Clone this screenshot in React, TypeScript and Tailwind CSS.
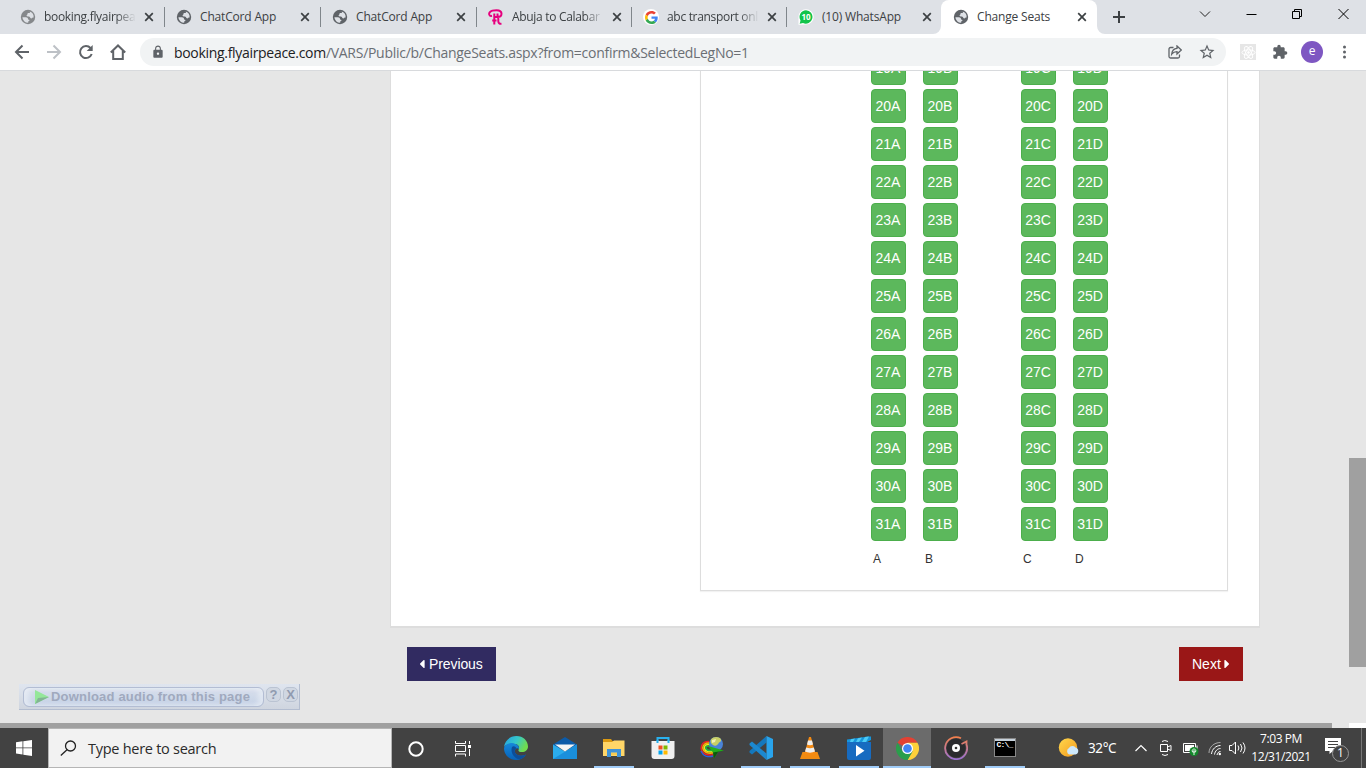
import React from "react";
import { MdExtension, MdLock, MdStarOutline } from "react-icons/md";
import { FaCaretLeft, FaCaretRight } from "react-icons/fa";

const Globe = ({ light }: { light?: boolean }) => (
  <svg className={light ? "h-4 w-4 text-[#85888b]" : "h-4 w-4 text-[#5f6368]"} viewBox="0 0 16 16">
    <circle cx="8" cy="8" r="7.200" fill="currentColor" />
    <path
      d="M2.400 8.200H6c1.200 0 2.100.8 2.100 1.900 0 .7.600.9 1.300.9v.8c-.8.1-1.200.6-1.200 1.300v.6A5.700 5.700 0 0 1 2.400 8.200z"
      fill="#dee1e6"
    />
    <path
      d="M8 2.500c.8 0 1.500.1 2.100.4-.1.900-.8 1.200-1.500 1.200-.9 0-1.300.6-1.300 1.300 0 .6-.4.900-1 .9.200 1 1.200 1.200 2.500 1.200 1 0 1.300.8 1.600 1.400.4.700 1.300.6 1.800 0 .3-.4.800-.5 1.400-.4.400-2.900-1.300-5.100-3.500-5.800z"
      fill="#dee1e6"
    />
  </svg>
);

const Royal = () => (
  <svg className="h-4 w-4" viewBox="0 0 16 16" fill="none" stroke="#e6007e" strokeWidth="2">
    <path d="M4 6.800C1 7.500.500 4.500 2 3 3.500 1.300 6 1.200 8.500 1.200 11.500 1.200 13.500 2.600 13.500 4.800 13.500 7 12 8 9.500 8H5.500M6.300 4.500V15.500M4.200 11.500H8.500M9.700 8c1 .8.500 2.500.600 4 0 2.500 1.500 3 3.200 2.600M9.500 4.500V8" />
  </svg>
);

const Google = () => (
  <span className="flex h-4 w-4 items-center justify-center rounded-full bg-white">
    <svg className="h-[13px] w-[13px]" viewBox="0 0 48 48">
      <path fill="#EA4335" d="M24 9.500c3.540 0 6.710 1.220 9.210 3.600l6.850-6.850C35.900 2.380 30.470 0 24 0 14.620 0 6.510 5.380 2.560 13.220l7.980 6.190C12.430 13.720 17.740 9.500 24 9.500z" />
      <path fill="#4285F4" d="M46.980 24.550c0-1.570-.15-3.090-.38-4.550H24v9.020h12.940c-.58 2.960-2.260 5.480-4.780 7.180l7.730 6c4.510-4.180 7.090-10.360 7.090-17.650z" />
      <path fill="#FBBC05" d="M10.530 28.590c-.48-1.450-.76-2.990-.76-4.590s.27-3.140.76-4.590l-7.980-6.190C.92 16.460 0 20.120 0 24c0 3.880.92 7.540 2.560 10.780l7.970-6.190z" />
      <path fill="#34A853" d="M24 48c6.480 0 11.930-2.130 15.890-5.810l-7.730-6c-2.150 1.450-4.920 2.300-8.160 2.300-6.260 0-11.570-4.220-13.470-9.910l-7.980 6.190C6.510 42.620 14.620 48 24 48z" />
    </svg>
  </span>
);

const WhatsApp = () => (
  <span className="relative flex h-4 w-4 items-center justify-center">
    <svg className="absolute inset-0 h-4 w-4" viewBox="0 0 16 16">
      <path d="M8 .2A7.600 7.600 0 0 1 8 15.600L.5 15.800.5 8A7.500 7.500 0 0 1 8 .2z" fill="#fff" />
      <path d="M8 1.200A6.700 6.700 0 1 1 5 14l-3.300.8.8-3.400A6.700 6.700 0 0 1 8 1.200z" fill="#12c44b" />
    </svg>
    <span className="relative font-['Open_Sans',sans-serif] text-[8px] leading-none font-bold text-white">10</span>
  </span>
);

const Cross = () => (
  <svg className="h-[10px] w-[10px] shrink-0" viewBox="0 0 10 10" stroke="#3c4043" strokeWidth="1.700">
    <path d="M1.200 1.200l7.600 7.600M8.800 1.200L1.200 8.800" />
  </svg>
);

type Tab = { title: string; icon: React.ReactNode; width: string; fade?: boolean; sep?: boolean };

const tabs: Tab[] = [
  { title: "booking.flyairpea", icon: <Globe light />, width: "w-[156px]", fade: true, sep: true },
  { title: "ChatCord App", icon: <Globe />, width: "w-[156px]", sep: true },
  { title: "ChatCord App", icon: <Globe />, width: "w-[156px]", sep: true },
  { title: "Abuja to Calabar", icon: <Royal />, width: "w-[155px]", fade: true, sep: true },
  { title: "abc transport onl", icon: <Google />, width: "w-[155px]", fade: true, sep: true },
  { title: "(10) WhatsApp", icon: <WhatsApp />, width: "w-[154px]" },
];

function TabBody({ title, icon, fade }: { title: string; icon: React.ReactNode; fade?: boolean }) {
  return (
    <>
      <span className="flex h-4 w-4 shrink-0 items-center justify-center">{icon}</span>
      <span
        className={
          fade
            ? "ml-2 w-[92px] shrink-0 tracking-[-0.310px] whitespace-nowrap [mask-image:linear-gradient(to_right,black_78%,transparent)]"
            : "ml-2 w-[92px] shrink-0 tracking-[-0.180px] whitespace-nowrap"
        }
      >
        {title}
      </span>
      <span className="ml-2 flex">
        <Cross />
      </span>
    </>
  );
}

function TabStrip() {
  return (
    <div className="flex h-[34px] shrink-0 bg-[#dee1e6] pl-[9px] text-[12px] text-[#3c4043]">
      {tabs.map((t, i) => (
        <div key={i} className={`flex shrink-0 items-center pl-[11px] ${t.width}`}>
          <TabBody title={t.title} icon={t.icon} fade={t.fade} />
          {t.sep && <span className="ml-auto h-5 w-px bg-[#80868b]" />}
        </div>
      ))}
      <div className="relative flex w-[156px] shrink-0 items-center rounded-t-[8px] bg-white pl-[12px]">
        <svg className="absolute bottom-0 -left-2 h-2 w-2" viewBox="0 0 8 8">
          <path d="M8 0v8H0a8 8 0 0 0 8-8z" fill="#fff" />
        </svg>
        <svg className="absolute -right-2 bottom-0 h-2 w-2" viewBox="0 0 8 8">
          <path d="M0 0v8h8a8 8 0 0 1-8-8z" fill="#fff" />
        </svg>
        <TabBody title="Change Seats" icon={<Globe />} />
      </div>
      <svg className="mt-[11px] ml-[16px] h-3 w-3" viewBox="0 0 12 12" stroke="#3c4043" strokeWidth="2">
        <path d="M6 0v12M0 6h12" />
      </svg>
      <div className="mt-[8px] mr-[17px] ml-auto flex h-3 items-center text-black">
        <svg className="mr-[35px] h-3 w-3" viewBox="0 0 12 12" fill="none" stroke="#222">
          <path d="M1 3.500l5 5 5-5" />
        </svg>
        <svg className="mr-[35px] h-3 w-[11px]" viewBox="0 0 11 12" stroke="#000">
          <path d="M0.500 6.500h10" />
        </svg>
        <svg className="mr-[35px] h-3 w-[11px]" viewBox="0 0 11 12" fill="none" stroke="#000">
          <path d="M.5 3.500h7v7h-7zM2.500 3.500v-2h7v7h-2" />
        </svg>
        <svg className="h-3 w-[11px]" viewBox="0 0 11 12" stroke="#000">
          <path d="M.5 1l10 10M10.500 1l-10 10" />
        </svg>
      </div>
    </div>
  );
}

function Toolbar() {
  return (
    <div className="flex h-[37px] shrink-0 items-center border-b border-[#d8dadd] bg-white pl-[14px]">
      <svg className="h-4 w-4" viewBox="0 0 16 16" fill="none" stroke="#5f6368" strokeWidth="2">
        <path d="M15 8H2M8.500 1.500L2 8l6.500 6.500" />
      </svg>
      <svg className="ml-4 h-4 w-4" viewBox="0 0 16 16" fill="none" stroke="#bdc1c6" strokeWidth="2">
        <path d="M1 8h13M7.500 1.500L14 8l-6.500 6.500" />
      </svg>
      <svg className="ml-4 h-4 w-4" viewBox="0 0 16 16" fill="none" stroke="#5f6368" strokeWidth="2">
        <path d="M13.700 10A6 6 0 1 1 12.500 4l1 1.200" />
        <path d="M14.700 1v6H8.700z" fill="#5f6368" stroke="none" />
      </svg>
      <svg className="ml-4 h-4 w-4" viewBox="0 0 16 16" fill="none" stroke="#5f6368" strokeWidth="2">
        <path d="M.8 8.500L8 1.500l7.200 7M3.200 7v8h9.600V7" />
      </svg>
      <div className="ml-[14px] flex h-7 w-[1086px] shrink-0 items-center rounded-full bg-[#f1f3f4] pr-[10px] pl-[11px]">
        <MdLock className="h-[14px] w-[14px] text-[#5f6368]" />
        <span className="ml-[9px] text-[14px] tracking-[-0.280px] whitespace-nowrap text-[#6b6f74]">
          <span className="tracking-[-0.310px] text-[#202124]">booking.flyairpeace.com</span>/VARS/Public/b/ChangeSeats.aspx?from=confirm&amp;SelectedLegNo=1
        </span>
        <svg className="ml-auto h-[14px] w-[14px]" viewBox="0 0 14 14" fill="none" stroke="#5f6368" strokeWidth="1.300">
          <path d="M5.500 2.500H2.500a1.500 1.500 0 0 0-1.500 1.500v7.500A1.500 1.500 0 0 0 2.500 13H10a1.500 1.500 0 0 0 1.500-1.500V9.500" />
          <path d="M9 1l4.300 4L9 9V6.700C6.500 6.700 5 7.500 3.700 9.200 4 6 5.800 3.700 9 3.400z" />
        </svg>
        <MdStarOutline className="ml-4 h-[18px] w-[18px] text-[#5f6368]" />
      </div>
      <span className="ml-[14px] flex h-4 w-4 items-center justify-center bg-[#e6e6e6]">
        <svg className="h-[15px] w-[15px]" viewBox="-8 -8 16 16" fill="none" stroke="#fff" strokeWidth="1">
          <ellipse rx="7" ry="2.800" />
          <ellipse rx="7" ry="2.800" transform="rotate(60)" />
          <ellipse rx="7" ry="2.800" transform="rotate(120)" />
          <circle r="1" fill="#fff" />
        </svg>
      </span>
      <MdExtension className="ml-4 h-4 w-4 text-[#5f6368]" />
      <span className="ml-[13px] flex h-[22px] w-[22px] items-center justify-center rounded-full bg-[#7e57c2] pb-0.5 text-[12px] leading-none text-white">
        e
      </span>
      <svg className="ml-[19px] h-4 w-1 overflow-visible" viewBox="0 0 4 16" fill="#5f6368">
        <circle cx="2.500" cy="3" r="1.500" />
        <circle cx="2.500" cy="8" r="1.500" />
        <circle cx="2.500" cy="13" r="1.500" />
      </svg>
    </div>
  );
}

const rows = [19, 20, 21, 22, 23, 24, 25, 26, 27, 28, 29, 30, 31];

function Seat({ label }: { label: string }) {
  return (
    <button className="h-[34px] w-[35px] rounded-[4px] border border-[#4cae4c] bg-[#5cb85c] pr-px text-center text-[14px] leading-[20px] text-white">
      {label}
    </button>
  );
}

function SeatMap() {
  return (
    <div className="-mt-[21px] ml-[309px] h-[541px] w-[528px] border border-[#ddd] pl-[170px] shadow-[0_1px_1px_rgba(0,0,0,0.05)]">
      <div className="flex flex-col gap-1">
        {rows.map((r) => (
          <div key={r} className="grid grid-cols-[52px_98px_52px_35px]">
            {["A", "B", "C", "D"].map((c) => (
              <Seat key={c} label={`${r}${c}`} />
            ))}
          </div>
        ))}
      </div>
      <div className="mt-[10px] grid grid-cols-[52px_98px_52px_35px] pl-[2px] text-[12px] leading-[17px] text-[#333]">
        <span>A</span>
        <span>B</span>
        <span>C</span>
        <span>D</span>
      </div>
    </div>
  );
}

function Page() {
  return (
    <div className="relative flex min-h-0 flex-1 bg-[#e6e6e6] font-['Liberation_Sans',Arial,sans-serif]">
      <div className="flex min-w-0 flex-1 flex-col overflow-hidden">
        <div className="flex h-[652px] flex-col overflow-hidden pl-[390px]">
          <div className="h-[557px] w-[870px] shrink-0 overflow-hidden border-x border-b-2 border-[#ddd] bg-white">
            <SeatMap />
          </div>
          <div className="mt-[19px] flex w-[853px] justify-between pl-[17px] text-[14px] text-white">
            <button className="flex h-[34px] w-[89px] items-center bg-[#312b61] pl-[11px] tracking-[-0.100px]">
              <FaCaretLeft className="mr-[3px] h-[14px] w-2" />
              Previous
            </button>
            <button className="flex h-[34px] w-[64px] items-center bg-[#9a1717] pl-[13px]">
              Next
              <FaCaretRight className="ml-[2px] h-[14px] w-2" />
            </button>
          </div>
        </div>
        <div className="h-[5px] w-[1332px] bg-[#a0a0a0]" />
      </div>
      <div className="flex w-[17px] flex-col justify-between pt-[387px]">
        <div className="h-[209px] bg-[#a0a0a0]" />
        <div className="h-[5px] bg-white" />
      </div>

      <div className="absolute top-[613px] left-[19px] flex h-[26px] w-[281px] items-center border-r border-b border-[#b3bdd0] bg-linear-to-b from-[#dfe5ef] to-[#cfd5df] pl-1">
        <div className="flex h-5 w-[241px] items-center rounded-[6px] border border-[#b3bdd3] bg-linear-to-b from-[#d9e0ec] to-[#c5d2e6] pl-[10px] shadow-[inset_5px_0_5px_rgba(235,240,247,0.7),inset_-5px_0_5px_rgba(235,240,247,0.6)]">
          <svg className="h-[14px] w-[15px] shrink-0" viewBox="0 0 15 14">
            <path d="M1 0l14 7-14 7z" fill="#94e79a" />
            <path d="M1 14l3-6 11-1z" fill="#82b594" />
          </svg>
          <span className="ml-0.5 text-[13px] font-bold tracking-[0.190px] whitespace-nowrap text-[#a0a9be]">Download audio from this page</span>
        </div>
        {["?", "X"].map((c) => (
          <span key={c} className="mb-[5px] ml-[2px] flex h-[15px] w-[15px] items-center justify-center rounded-[5px] border border-[#bac3d2] bg-[#d0d7e2] text-[13px] leading-none font-bold text-[#909bb0]">
            {c}
          </span>
        ))}
      </div>
    </div>
  );
}

const Cortana = () => (
  <svg className="h-6 w-6" viewBox="0 0 24 24">
    <circle cx="12" cy="12" r="6.700" fill="none" stroke="#fff" strokeWidth="2" />
  </svg>
);
const TaskView = () => (
  <svg className="h-6 w-6" viewBox="0 0 24 24" fill="none" stroke="#fff">
    <path d="M3.500 4v2.500h10V4M3.500 19.500V17h10v2.500M3.500 8.500h10v6h-10zM17.500 4v3M17.500 12v7" />
    <path d="M16 8h3v3h-3z" fill="#fff" stroke="none" />
  </svg>
);
const Edge = () => (
  <svg className="h-6 w-6" viewBox="0 0 24 24">
    <defs>
      <linearGradient id="eg" x1="0" y1="0" x2="1" y2=".4">
        <stop offset="0" stopColor="#239ee5" />
        <stop offset=".55" stopColor="#36c8c9" />
        <stop offset="1" stopColor="#70dc4e" />
      </linearGradient>
      <linearGradient id="eb" x1="0" y1="0" x2="0" y2="1">
        <stop offset="0" stopColor="#1688da" />
        <stop offset="1" stopColor="#0762b8" />
      </linearGradient>
    </defs>
    <path d="M0 11C1 4.500 6 0 12.500 0 19 0 24 4.800 24 10.500c0 3.500-2.700 5.500-6 5.500-2.500 0-4-1-3.500-2 1.500-3 0-6-4-6C6 7 2 8.500 0 11z" fill="url(#eg)" />
    <path d="M0 12C1 8 5 6.700 9 7.200c4 .5 6.500 3 6 5.800-2-2-5 .2-4 3.500 1 3 6 4.500 11 2C20 22 16.500 24 12 24 5 24 0 18.500 0 12z" fill="url(#eb)" />
    <path d="M8 11c-2 5 2 12 8 12.300 2.700-.8 4.700-2.500 6-4.800-5 2.500-10 1-11-2-.6-2 0-3.500 1.500-4.200C11.500 10.500 9.500 9.500 8 11z" fill="#0c4e9a" />
  </svg>
);
const Mail = () => (
  <svg className="h-6 w-6" viewBox="0 0 24 24">
    <path d="M0 8.500L12 1l12 7.500V12H0z" fill="#0c5ba8" />
    <path d="M0 8.500l12 7 12-7V23H0z" fill="#2bacec" />
    <path d="M0 23L24 8.500V23z" fill="#1a8fdb" />
    <path d="M2 8.500h20l-10 7z" fill="#f5f5f5" />
  </svg>
);
const Explorer = () => (
  <svg className="h-6 w-6" viewBox="0 0 24 24">
    <path d="M1 3h8l1.500 2H22v3H1z" fill="#dc9a12" />
    <path d="M1 6h9l2-1.500h10.500V20H1z" fill="#ffd668" />
    <path d="M5 21v-8h14v8h-4v-4.500H9V21z" fill="#3f93d8" />
    <path d="M9 17h6v2H9z" fill="#f9cb50" />
  </svg>
);
const Store = () => (
  <svg className="h-6 w-6" viewBox="0 0 24 24">
    <path d="M6.500 6V2h11v4" fill="none" stroke="#29b1ee" strokeWidth="2" />
    <path d="M.5 5h23v15a3 3 0 0 1-3 3h-17a3 3 0 0 1-3-3z" fill="#f0f0f0" />
    <path d="M5.500 4h2v3h-2zM16.500 4h2v3h-2z" fill="#29b1ee" />
    <path d="M7.500 9.500h4v4h-4z" fill="#f25022" />
    <path d="M12.500 9.500h4v4h-4z" fill="#7fba00" />
    <path d="M7.500 14.500h4v4h-4z" fill="#00a4ef" />
    <path d="M12.500 14.500h4v4h-4z" fill="#ffb900" />
  </svg>
);
const Idm = () => (
  <svg className="h-6 w-6" viewBox="0 0 24 24" fill="none">
    <path d="M9 5.500C4 5 .8 8.500 1.200 12.500 2 18.500 8 20 14 18.500" stroke="#e22" strokeWidth="1.500" />
    <path d="M9.500 7C5 6.700 2.700 9 2.800 12c.7 4.500 5.200 6 11.200 4.800" stroke="#ffb000" strokeWidth="1.500" />
    <path d="M10 8.500c-4-.4-5.700 1.200-5.700 3.500.7 3.200 4.700 4.500 9.700 3.300" stroke="#e8ec20" strokeWidth="1.500" />
    <path d="M10 10c-3-.4-4.200.6-4.200 2 .7 2.200 4.200 3 8.200 2" stroke="#19b946" strokeWidth="1.500" />
    <path d="M1 15c2 5 7 6.500 12 5" stroke="#2760df" strokeWidth="1.500" />
    <circle cx="16" cy="8" r="7" fill="#4a83d8" />
    <path d="M11 3.500C13.500.500 17 .500 20 2c2 2 1 4-1 4.500-1 3-4 4-6 2.500-2-1-3-3.500-2-5.500z" fill="#c9cf65" />
    <path d="M12 4l4-1-1 3-3 1z" fill="#f2f0b8" />
    <path d="M8 10l16 4.500-6 1.500-4 6.500-1-6z" fill="#23ad1d" />
    <path d="M14 22.500l4-6.500 6-1.500-11 2z" fill="#0b590e" />
  </svg>
);
const Code = () => (
  <svg className="h-6 w-6" viewBox="0 0 24 24">
    <path d="M17.500 0v6.500L3 18.500.5 16.500V15z" fill="#1478bd" />
    <path d="M17.500 24v-6.500L3 5.500.5 7.500V9z" fill="#1c88cf" />
    <path d="M17.500 0L24 3v18l-6.500 3z" fill="#29a4ec" />
  </svg>
);
const Vlc = () => (
  <svg className="h-6 w-6" viewBox="0 0 24 24">
    <path d="M4.500 16h15l2.500 7H2z" fill="#f08b12" />
    <path d="M11 1h2l4.500 17c-2 2-9 2-11 0z" fill="#f48a13" />
    <path d="M10 4.500h4l1 4c-2 1-4 1-6 0zM8.200 11.500c3 1 4.600 1 7.600 0l1.200 4c-3 1.500-7 1.500-10 0z" fill="#eee" />
  </svg>
);
const Movies = () => (
  <svg className="h-6 w-6" viewBox="0 0 24 24">
    <path d="M0 6V3.500L21 .5h3V4L20 6z" fill="#1696dc" />
    <path d="M4 3.200l4-.6L6 6H3zM11 2.200l4-.6L12 6H9zM18 1l4-.5L19 6h-4z" fill="#4ccaf5" />
    <path d="M0 6h24v16a2 2 0 0 1-2 2H2a2 2 0 0 1-2-2z" fill="#176bc0" />
    <path d="M9 9l8.500 5.700L9 20.500z" fill="#fff" />
  </svg>
);
const Chrome = () => (
  <svg className="h-[23px] w-[23px]" viewBox="0 0 48 48">
    <path d="M24 24L3.200 12A24 24 0 0 1 44.800 12H24z" fill="#e34133" />
    <path d="M24 12h20.800A24 24 0 0 1 24 48l10.400-18z" fill="#fdd13a" />
    <path d="M34.400 30L24 48A24 24 0 0 1 3.200 12l10.400 18z" fill="#2a9e4b" />
    <circle cx="24" cy="24" r="11.500" fill="#fff" />
    <circle cx="24" cy="24" r="9" fill="#4285f4" />
  </svg>
);
const Groove = () => (
  <svg className="h-6 w-6" viewBox="0 0 24 24" fill="none">
    <defs>
      <linearGradient id="gr" x1="0" y1="0" x2="0" y2="1">
        <stop offset="0" stopColor="#f3804d" />
        <stop offset="1" stopColor="#9b72d2" />
      </linearGradient>
    </defs>
    <circle cx="12" cy="12" r="9.500" fill="#2b2b2e" />
    <path d="M17 2.300A11 11 0 1 0 22.500 8.500V5.500l-5 2.500" stroke="url(#gr)" strokeWidth="1.800" />
    <circle cx="12" cy="12" r="4" fill="#fff" />
    <circle cx="12" cy="12" r="1.300" fill="#333" />
  </svg>
);
const Cmd = () => (
  <span className="mb-px flex h-[19px] w-[22px] flex-col border border-[#888] bg-black">
    <span className="h-[2px] bg-[#c7d2dc]" />
    <span className="pl-[2px] font-['Liberation_Mono',monospace] text-[8px] leading-[8px] font-bold tracking-[-0.800px] whitespace-nowrap text-white">C:\_</span>
  </span>
);

const systemApps = [<Cortana />, <TaskView />];

const apps: { icon: React.ReactNode; open?: boolean; active?: boolean }[] = [
  { icon: <Edge /> },
  { icon: <Mail /> },
  { icon: <Explorer />, open: true },
  { icon: <Store /> },
  { icon: <Idm /> },
  { icon: <Code />, open: true },
  { icon: <Vlc />, open: true },
  { icon: <Movies />, open: true },
  { icon: <Chrome />, active: true },
  { icon: <Groove /> },
  { icon: <Cmd />, open: true },
];

function Taskbar() {
  return (
    <div className="flex h-10 shrink-0 bg-[#424242] text-white">
      <div className="flex w-12 shrink-0 items-center justify-center">
        <svg className="h-4 w-4" viewBox="0 0 16 16" fill="#fff">
          <path d="M0 2.200l6.500-.9v6.200H0zM7.300 1.200L16 0v7.500H7.300zM0 8.300h6.500v6.200L0 13.600zM7.300 8.300H16V16l-8.700-1.200z" />
        </svg>
      </div>
      <div className="flex w-[344px] shrink-0 items-center border border-[#b5b5b5] bg-[#f2f2f2] pl-[11px] text-[14.500px] tracking-[-0.270px] text-[#2b2b2b]">
        <svg className="mr-[11px] h-4 w-[17px]" viewBox="0 0 17 16" fill="none" stroke="#222" strokeWidth="1.300">
          <circle cx="10.500" cy="6" r="5" />
          <path d="M7 9.700L.8 15.500" />
        </svg>
        <span className="pt-[2px]">Type here to search</span>
      </div>
      <div className="flex w-12 shrink-0 items-center justify-center pt-px">{systemApps[0]}</div>
      <div className="flex w-[51px] shrink-0 items-center pt-px pl-3">{systemApps[1]}</div>
      <div className="flex w-[538px] shrink-0">
        {apps.map((a, i) => (
          <div key={i} className={a.active ? "flex w-12 shrink-0 flex-col items-center bg-[#6b6b6b]" : "flex w-[49px] shrink-0 flex-col items-center"}>
            <div className="flex h-[38px] items-center pt-[2px]">{a.icon}</div>
            {a.active && <div className="h-[2px] w-full bg-[#a0ccf8]" />}
            {a.open && <div className="h-[2px] w-10 bg-[#a0ccf8]" />}
          </div>
        ))}
      </div>
      <div className="flex min-w-0 flex-1 items-center pl-[29px] whitespace-nowrap">
        <svg className="h-[22px] w-[22px] shrink-0" viewBox="0 0 22 22">
          <defs>
            <linearGradient id="sun" x1="0" y1="0" x2="1" y2="1">
              <stop offset="0" stopColor="#ffd84d" />
              <stop offset="1" stopColor="#f39a1d" />
            </linearGradient>
          </defs>
          <circle cx="10" cy="10.500" r="9.200" fill="url(#sun)" />
          <path d="M11 17.500a3.700 3.700 0 0 1 0-6.500 4 4 0 0 1 6.500-.5 3.600 3.600 0 0 1 0 7z" fill="#cde8fb" />
        </svg>
        <span className="ml-2 w-[29px] pt-px font-['Noto_Sans',sans-serif] text-[13.500px] tracking-[-0.400px]">32°C</span>
        <svg className="ml-[18px] h-3 w-3 shrink-0" viewBox="0 0 12 12" fill="none" stroke="#fff" strokeWidth="1.200">
          <path d="M.5 9L6 3.500 11.500 9" />
        </svg>
        <svg className="ml-[13px] h-4 w-3 shrink-0" viewBox="0 0 12 16" fill="none" stroke="#fff">
          <path d="M2 1.500Q4.500-.5 8 1.500M2 14.500q3 2 6 0M.5 4.500h7v7h-7zM7.500 7l3.500-1.500v5L7.500 9" />
        </svg>
        <svg className="ml-[11px] h-4 w-4 shrink-0" viewBox="0 0 16 16" fill="none">
          <path d="M.5 3.500h12v9H.5zM14 5.500v4" stroke="#fff" />
          <path d="M2 5h9v6H2z" fill="#fff" />
          <circle cx="11" cy="11.500" r="4.500" fill="#13882b" />
          <path d="M11 10v5M9.500 12c-1-2 .5-3 1.500-3s2.500 1 1.500 3z" stroke="#fff" strokeWidth=".9" />
        </svg>
        <svg className="ml-[9px] h-4 w-[14px] shrink-0" viewBox="0 0 14 16" fill="none" stroke="#fff">
          <path d="M1 13C1 7 6 2.500 12.500 2.500" stroke="#aaa" />
          <path d="M3.500 14C4 9 8 5.500 12.500 5.500M6.500 14.500C7 11 9.500 8.500 12.500 8.500M9 15c.5-2 1.500-3.500 3.500-3.500" />
          <circle cx="11.800" cy="14" r="1.200" fill="#fff" stroke="none" />
        </svg>
        <svg className="ml-[7px] h-4 w-[17px] shrink-0" viewBox="0 0 17 16" fill="none" stroke="#fff">
          <path d="M.5 5.500H3L6.500 2v12L3 10.500H.5zM9 5.500q1.800 2.500 0 5M11.500 4q3 4 0 8M14 2.500q4 5.500 0 11" />
        </svg>
        <div className="ml-[5px] w-[60px] shrink-0 text-center text-[12px] leading-[18px] tracking-[-0.420px]">
          <div>7:03 PM</div>
          <div>12/31/2021</div>
        </div>
        <div className="relative mt-[3px] ml-[14px] h-6 w-6 shrink-0">
          <svg className="h-4 w-4" viewBox="0 0 16 16">
            <path d="M0 0h16v13H8l-3.500 3v-3H0z" fill="#fff" />
            <path d="M3 3.500h10M3 6.500h10M3 9.500h7" stroke="#424242" />
          </svg>
          <span className="absolute top-[7px] left-[7px] flex h-[17px] w-[17px] items-center justify-center rounded-full border border-[#999] bg-[#424242] text-[12px] leading-none">
            1
          </span>
        </div>
        <div className="mr-1 ml-auto h-10 w-px bg-[#777]" />
      </div>
    </div>
  );
}

export default function App() {
  return (
    <div className="flex h-[768px] w-[1366px] flex-col overflow-hidden font-['Open_Sans','Noto_Sans',sans-serif]">
      <TabStrip />
      <Toolbar />
      <Page />
      <Taskbar />
    </div>
  );
}
